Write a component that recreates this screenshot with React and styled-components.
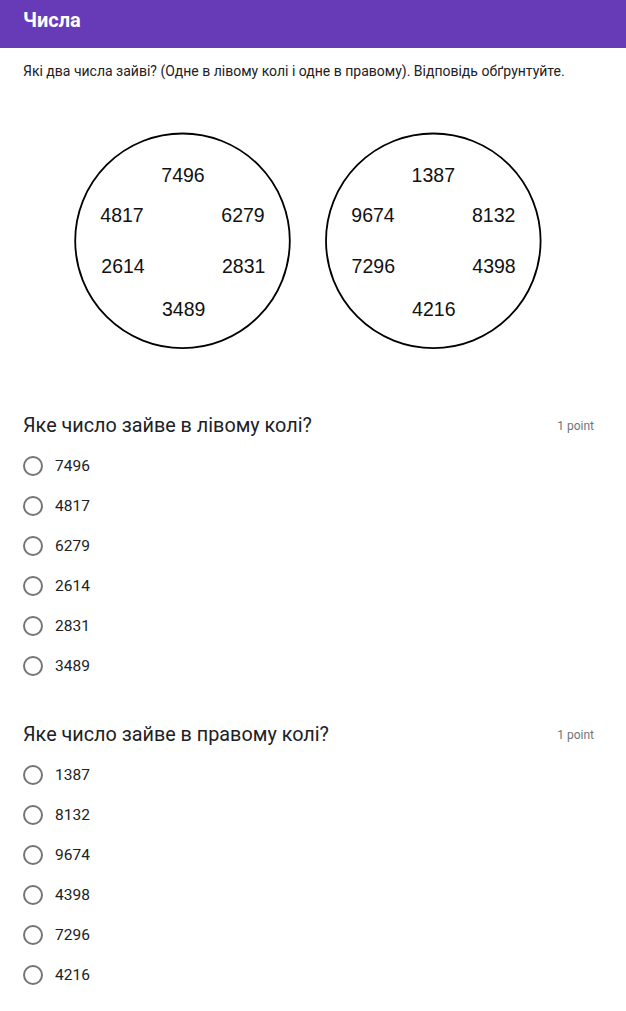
import React from "react";
import styled, { createGlobalStyle } from "styled-components";

const GlobalStyle = createGlobalStyle`
    body {
        margin: 0;
        background: #fff;
        font-family: Roboto, "Noto Sans", Arial, sans-serif;
        color: #202124;
    }
`;

const Page = styled.div`
    width: 626px;
`;

const Header = styled.header`
    height: 48px;
    background: #673ab7;
    padding: 0 23px;
    box-sizing: border-box;
    h1 {
        margin: 0;
        font-size: 20px;
        font-weight: 700;
        line-height: 40px;
        color: #fff;
    }
`;

const Body = styled.main`
    padding: 13px 32px 0 23px;
`;

const Description = styled.p`
    margin: 0;
    font-size: 14px;
    line-height: 20px;
    color: #202124;
`;

const Figure = styled.svg`
    display: block;
    margin: 39px 0 0 37px;
    text {
        font-family: "Liberation Sans", Arial, sans-serif;
        font-size: 19.5px;
        fill: #111;
    }
`;

const Question = styled.section`
    margin-top: ${(p) => p.$top}px;
`;

const QuestionHead = styled.div`
    display: flex;
    justify-content: space-between;
    align-items: center;
    height: 24px;
    h2 {
        margin: 0;
        font-size: 19.8px;
        font-weight: 400;
        line-height: 24px;
        color: #202124;
    }
    span {
        font-size: 12px;
        color: #70757a;
    }
`;

const Options = styled.div`
    display: flex;
    flex-direction: column;
    margin-top: 8px;
`;

const Option = styled.label`
    display: flex;
    align-items: center;
    gap: 12px;
    height: 40px;
    font-size: 15.5px;
    color: #202124;
    cursor: pointer;
`;

const Radio = styled.span`
    width: 20px;
    height: 20px;
    box-sizing: border-box;
    border: 2px solid #757575;
    border-radius: 50%;
    flex-shrink: 0;
`;

// числа по колах: [x, y] відносно малюнка
const circles = [
    {
        cx: 122.5,
        items: [
            ["7496", 123, 61.5], ["4817", 62, 102], ["6279", 183, 102],
            ["2614", 63, 153], ["2831", 183.7, 153], ["3489", 123.7, 196],
        ],
    },
    {
        cx: 373.3,
        items: [
            ["1387", 373.3, 61.5], ["9674", 313, 102], ["8132", 433.7, 102],
            ["7296", 313.3, 153], ["4398", 434, 153], ["4216", 373.8, 196],
        ],
    },
];

const questions = [
    { title: "Яке число зайве в лівому колі?", options: ["7496", "4817", "6279", "2614", "2831", "3489"], top: 54 },
    { title: "Яке число зайве в правому колі?", options: ["1387", "8132", "9674", "4398", "7296", "4216"], top: 37 },
];

const App = () => {
    return (
        <Page>
            <GlobalStyle />
            <Header>
                <h1>Числа</h1>
            </Header>
            <Body>
                <Description>
                    Які два числа зайві? (Одне в лівому колі і одне в правому). Відповідь обґрунтуйте.
                </Description>
                <Figure width="500" height="240" viewBox="0 0 500 240">
                    {circles.map((c) => (
                        <g key={c.cx}>
                            <circle cx={c.cx} cy="120.8" r="107.3" fill="none" stroke="#000" strokeWidth="1.8" />
                            {c.items.map(([n, x, y]) => (
                                <text key={n} x={x} y={y} textAnchor="middle">{n}</text>
                            ))}
                        </g>
                    ))}
                </Figure>
                {questions.map((q) => (
                    <Question key={q.title} $top={q.top}>
                        <QuestionHead>
                            <h2>{q.title}</h2>
                            <span>1 point</span>
                        </QuestionHead>
                        <Options>
                            {q.options.map((o) => (
                                <Option key={o}>
                                    <Radio />
                                    {o}
                                </Option>
                            ))}
                        </Options>
                    </Question>
                ))}
            </Body>
        </Page>
    );
};

export default App;
